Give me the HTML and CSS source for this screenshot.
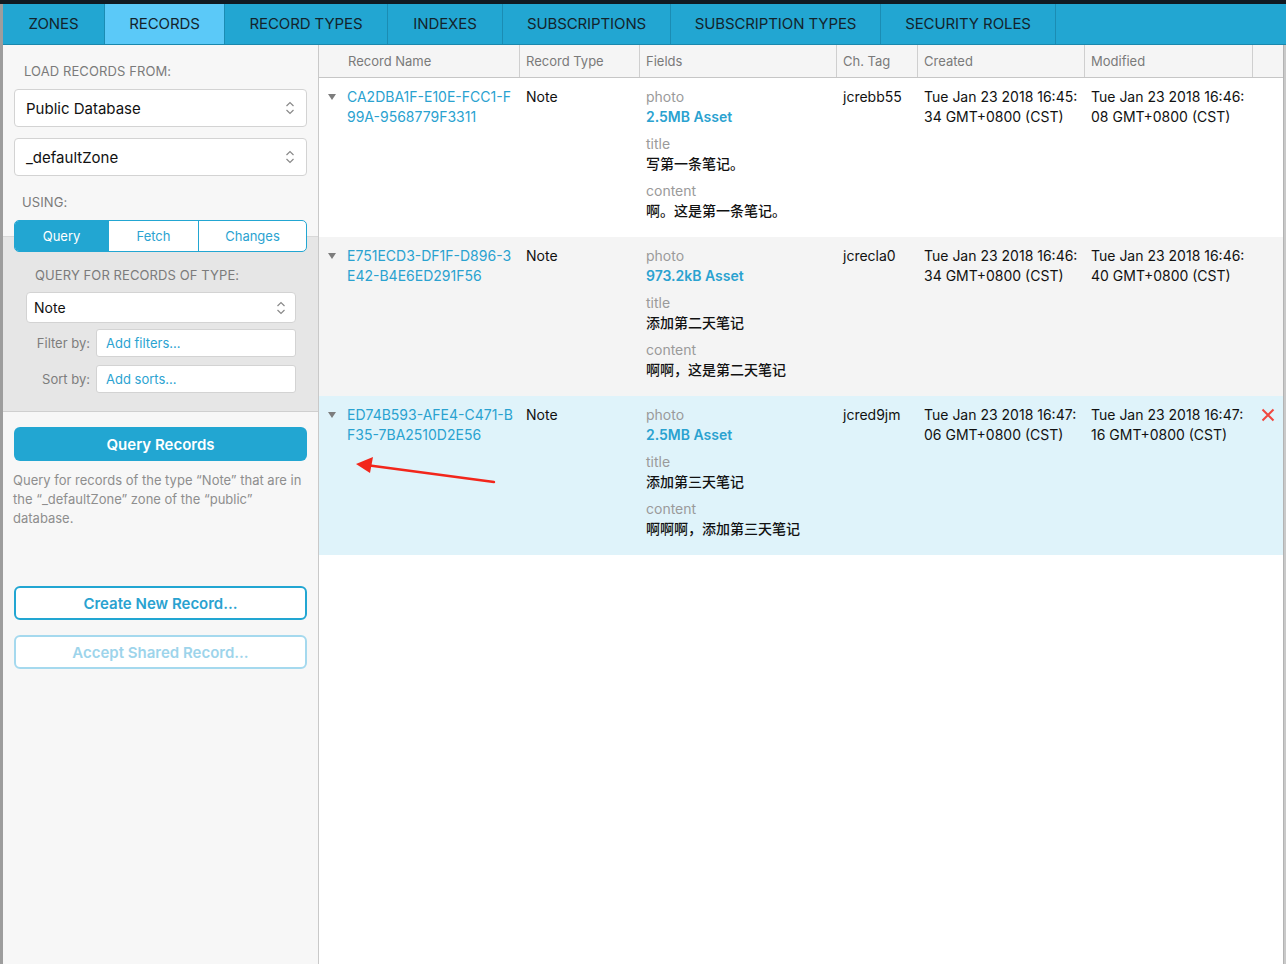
FILE: index.html
```html
<!DOCTYPE html>
<html lang="en">
<head>
<meta charset="utf-8">
<title>CloudKit Dashboard - Records</title>
<link rel="stylesheet" href="styles.css">
</head>
<body>
<div class="app">
  <div class="topstrip"></div>
  <div class="frame">
    <nav class="tabs">
      <div class="tab">ZONES</div>
      <div class="tab active">RECORDS</div>
      <div class="tab">RECORD TYPES</div>
      <div class="tab">INDEXES</div>
      <div class="tab">SUBSCRIPTIONS</div>
      <div class="tab">SUBSCRIPTION TYPES</div>
      <div class="tab">SECURITY ROLES</div>
      <div class="tab-fill"></div>
    </nav>
    <div class="body">
      <aside class="sidebar">
        <div class="sb-top">
          <div class="sb-label">LOAD RECORDS FROM:</div>
          <div class="select big">
            <span>Public Database</span>
            <svg class="updown" width="10" height="16" viewBox="0 0 10 16"><path d="M1.5 6 L5 2.5 L8.5 6 M1.5 10 L5 13.5 L8.5 10" fill="none" stroke="#8a8a8a" stroke-width="1.2"/></svg>
          </div>
          <div class="select big second">
            <span>_defaultZone</span>
            <svg class="updown" width="10" height="16" viewBox="0 0 10 16"><path d="M1.5 6 L5 2.5 L8.5 6 M1.5 10 L5 13.5 L8.5 10" fill="none" stroke="#8a8a8a" stroke-width="1.2"/></svg>
          </div>
          <div class="sb-label using">USING:</div>
        </div>
        <div class="seg-wrap">
          <div class="seg">
            <div class="seg-item on q">Query</div>
            <div class="seg-item f">Fetch</div>
            <div class="seg-item c">Changes</div>
          </div>
        </div>
        <div class="sb-query">
          <div class="sb-label qlabel">QUERY FOR RECORDS OF TYPE:</div>
          <div class="select small">
            <span>Note</span>
            <svg class="updown" width="10" height="16" viewBox="0 0 10 16"><path d="M1.5 6 L5 2.5 L8.5 6 M1.5 10 L5 13.5 L8.5 10" fill="none" stroke="#8a8a8a" stroke-width="1.2"/></svg>
          </div>
          <div class="frow">
            <span class="flabel">Filter by:</span>
            <div class="finput">Add filters...</div>
          </div>
          <div class="frow sort">
            <span class="flabel">Sort by:</span>
            <div class="finput">Add sorts...</div>
          </div>
        </div>
        <div class="sb-bottom">
          <div class="btn primary">Query Records</div>
          <p class="desc">Query for records of the type “Note” that are in the “_defaultZone” zone of the “public” database.</p>
          <div class="btn outline">Create New Record...</div>
          <div class="btn outline disabled">Accept Shared Record...</div>
        </div>
      </aside>
      <main class="table">
        <div class="thead">
          <div class="th first">Record Name</div>
          <div class="th">Record Type</div>
          <div class="th">Fields</div>
          <div class="th">Ch. Tag</div>
          <div class="th">Created</div>
          <div class="th">Modified</div>
          <div class="th last"></div>
        </div>
        <div class="row">
          <div class="td name"><span class="tri"></span><span class="link">CA2DBA1F-E10E-FCC1-F<br>99A-9568779F3311</span></div>
          <div class="td">Note</div>
          <div class="td fields">
            <div class="field"><div class="fk">photo</div><div class="fv asset">2.5MB Asset</div></div>
            <div class="field"><div class="fk">title</div><div class="fv">写第一条笔记。</div></div>
            <div class="field"><div class="fk">content</div><div class="fv">啊。这是第一条笔记。</div></div>
          </div>
          <div class="td">jcrebb55</div>
          <div class="td">Tue Jan 23 2018 16:45:<br>34 GMT+0800 (CST)</div>
          <div class="td">Tue Jan 23 2018 16:46:<br>08 GMT+0800 (CST)</div>
          <div class="td"></div>
        </div>
        <div class="row alt">
          <div class="td name"><span class="tri"></span><span class="link">E751ECD3-DF1F-D896-3<br>E42-B4E6ED291F56</span></div>
          <div class="td">Note</div>
          <div class="td fields">
            <div class="field"><div class="fk">photo</div><div class="fv asset">973.2kB Asset</div></div>
            <div class="field"><div class="fk">title</div><div class="fv">添加第二天笔记</div></div>
            <div class="field"><div class="fk">content</div><div class="fv">啊啊，这是第二天笔记</div></div>
          </div>
          <div class="td">jcrecla0</div>
          <div class="td">Tue Jan 23 2018 16:46:<br>34 GMT+0800 (CST)</div>
          <div class="td">Tue Jan 23 2018 16:46:<br>40 GMT+0800 (CST)</div>
          <div class="td"></div>
        </div>
        <div class="row sel">
          <div class="td name"><span class="tri"></span><span class="link">ED74B593-AFE4-C471-B<br>F35-7BA2510D2E56</span></div>
          <div class="td">Note</div>
          <div class="td fields">
            <div class="field"><div class="fk">photo</div><div class="fv asset">2.5MB Asset</div></div>
            <div class="field"><div class="fk">title</div><div class="fv">添加第三天笔记</div></div>
            <div class="field"><div class="fk">content</div><div class="fv">啊啊啊，添加第三天笔记</div></div>
          </div>
          <div class="td">jcred9jm</div>
          <div class="td">Tue Jan 23 2018 16:47:<br>06 GMT+0800 (CST)</div>
          <div class="td">Tue Jan 23 2018 16:47:<br>16 GMT+0800 (CST)</div>
          <div class="td del"><svg width="14" height="14" viewBox="0 0 14 14"><path d="M1.5 1.5 L12.5 12.5 M12.5 1.5 L1.5 12.5" stroke="#f0473f" stroke-width="2" fill="none"/></svg></div>
        </div>
      </main>
      <div class="edge"></div>
    </div>
  </div>
  <svg class="arrow" width="160" height="40" viewBox="0 0 160 40"><line x1="142" y1="27" x2="14" y2="10" stroke="#f2261b" stroke-width="2.4" stroke-linecap="round"/><polygon points="4,9 21,2 18,18" fill="#f2261b"/></svg>
</div>
</body>
</html>
```
FILE: styles.css
```css
* { box-sizing: border-box; }
html, body { margin: 0; padding: 0; }
body {
  font-family: Inter, "Noto Sans CJK SC", "Liberation Sans", sans-serif;
  background: #ffffff;
  color: #1b1b1b;
}
.app {
  position: relative;
  width: 1286px;
  height: 964px;
  overflow: hidden;
  display: flex;
  flex-direction: column;
}
.topstrip { height: 4px; background: #101a22; flex: none; }
.frame {
  flex: 1;
  display: flex;
  flex-direction: column;
  border-left: 3px solid #9d9d9d;
  min-height: 0;
}
.tabs {
  display: flex;
  height: 41px;
  background: #22a6d2;
  border-bottom: 1px solid #1a88ad;
  flex: none;
}
.tab {
  padding: 0;
  font-size: 15px;
  line-height: 40px;
  color: #13242d;
  border-right: 1px solid #1b8cb3;
  letter-spacing: -0.1px;
  white-space: nowrap;
  text-align: center;
  flex: none;
}
.tab:nth-child(1) { width: 102px; }
.tab:nth-child(2) { width: 120px; }
.tab:nth-child(3) { width: 163px; }
.tab:nth-child(4) { width: 115px; }
.tab:nth-child(5) { width: 168px; }
.tab:nth-child(6) { width: 210px; }
.tab:nth-child(7) { width: 175px; }
.tab.active { background: #5bc9f8; }
.tab-fill { flex: 1; }

.body { flex: 1; display: flex; min-height: 0; }

/* Sidebar */
.sidebar {
  width: 316px;
  flex: none;
  background: #f7f7f7;
  border-right: 1px solid #c9c9c9;
  display: flex;
  flex-direction: column;
}
.sb-top { padding: 18px 11px 0 11px; }
.sb-label {
  font-size: 13px;
  line-height: 16px;
  color: #7b7b7b;
  padding-left: 10px;
  letter-spacing: 0.1px;
}
.select {
  display: flex;
  align-items: center;
  justify-content: space-between;
  background: #fff;
  border: 1px solid #d3d3d3;
  border-radius: 4px;
  color: #111;
}
.select.big {
  height: 38px;
  margin-top: 10px;
  padding: 0 11px 0 11px;
  font-size: 15px;
}
.select.second { margin-top: 11px; }
.sb-label.using { margin-top: 18px; padding-left: 8px; }
.seg-wrap {
  padding: 10px 11px 0 11px;
  background: linear-gradient(to bottom, #f7f7f7 0, #f7f7f7 26px, #d8d8d8 26px, #d8d8d8 27px, #e6e6e6 27px);
}
.seg {
  display: flex;
  height: 32px;
  border: 1px solid #22a6d2;
  border-radius: 5px;
  overflow: hidden;
  background: #fff;
}
.seg-item {
  display: flex;
  align-items: center;
  justify-content: center;
  font-size: 13px;
  color: #2ba3d1;
}
.seg-item.q { width: 93px; }
.seg-item.f { width: 90px; border-left: 1px solid #22a6d2; }
.seg-item.c { flex: 1; border-left: 1px solid #22a6d2; }
.seg-item.on { background: #22a6d2; color: #fff; }

.sb-query {
  background: #e6e6e6;
  padding: 15px 22px 18px 23px;
  border-bottom: 1px solid #cfcfcf;
}
.sb-label.qlabel { padding-left: 9px; }
.select.small {
  height: 31px;
  margin-top: 9px;
  padding: 0 9px 0 7px;
  font-size: 14px;
}
.frow {
  display: flex;
  align-items: center;
  margin-top: 6px;
}
.frow.sort { margin-top: 8px; }
.flabel {
  width: 70px;
  text-align: right;
  padding-right: 6px;
  font-size: 13px;
  color: #7d7d7d;
}
.finput {
  width: 200px;
  height: 28px;
  background: #fff;
  border: 1px solid #d3d3d3;
  border-radius: 3px;
  font-size: 13px;
  line-height: 26px;
  padding-left: 9px;
  color: #2ba3d1;
}

.sb-bottom { padding: 15px 11px 0 11px; }
.btn {
  height: 34px;
  border-radius: 6px;
  display: flex;
  align-items: center;
  justify-content: center;
  font-size: 15px;
  font-weight: 600;
}
.btn.primary { background: #22a6d2; color: #fff; }
.btn.outline {
  background: #fff;
  border: 2px solid #22a6d2;
  color: #2aa2d0;
}
.btn.outline.disabled {
  border-color: #a5d9ee;
  color: #9dd4eb;
  margin-top: 15px;
}
.desc {
  margin: 10px 0 0 -1px;
  font-size: 13px;
  line-height: 19px;
  color: #8e8e8e;
  height: 115px;
}

/* Table */
.table {
  width: 964px;
  flex: none;
  background: #fff;
}
.thead, .row {
  display: grid;
  grid-template-columns: 200px 120px 197px 81px 167px 168px 31px;
}
.thead {
  height: 33px;
  background: #f5f5f5;
  border-bottom: 1px solid #c6c6c6;
}
.th {
  font-size: 13px;
  color: #7a7a7a;
  line-height: 32px;
  padding-left: 6px;
  border-left: 1px solid #cfcfcf;
}
.th.first { border-left: none; padding-left: 29px; }
.row { padding: 9px 0 16px 0; }
.row.alt { background: #f4f4f4; }
.row.sel { background: #dff3fa; }
.td {
  font-size: 14px;
  line-height: 20px;
  padding-left: 7px;
  color: #111;
}
.td.name { display: flex; padding-left: 9px; }
.tri {
  width: 0; height: 0;
  margin-top: 7px;
  margin-right: 11px;
  border-left: 4px solid transparent;
  border-right: 4px solid transparent;
  border-top: 6px solid #7d7d7d;
}
.link { color: #2aa2d0; }
.fields { display: flex; flex-direction: column; gap: 7px; }
.fk { color: #9a9a9a; }
.fv { font-weight: 500; }
.fv.asset { color: #2aa2d0; font-weight: 600; }
.td.del { padding-left: 9px; padding-top: 2px; }

.edge {
  flex: 1;
  background: #c9c9c9;
  border-left: 1px solid #b3b3b3;
}

.arrow {
  position: absolute;
  left: 352px;
  top: 455px;
}
```
